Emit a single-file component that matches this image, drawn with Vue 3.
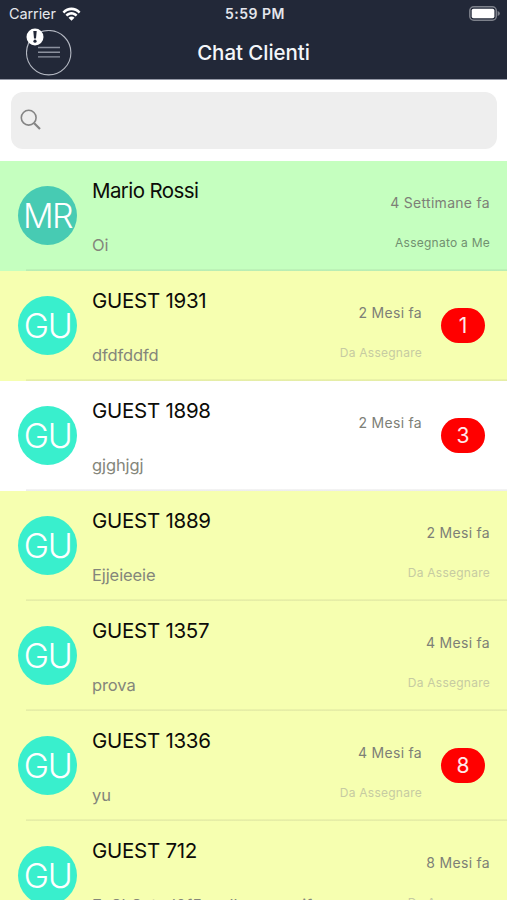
<script setup>
const chats = [
  { initials: 'MR', name: 'Mario Rossi', message: 'Oi', time: '4 Settimane fa', status: 'Assegnato a Me', tone: 'mine' },
  { initials: 'GU', name: 'GUEST 1931', message: 'dfdfddfd', time: '2 Mesi fa', status: 'Da Assegnare', tone: 'open', unread: 1 },
  { initials: 'GU', name: 'GUEST 1898', message: 'gjghjgj', time: '2 Mesi fa', status: '', tone: 'plain', unread: 3 },
  { initials: 'GU', name: 'GUEST 1889', message: 'Ejjeieeie', time: '2 Mesi fa', status: 'Da Assegnare', tone: 'open' },
  { initials: 'GU', name: 'GUEST 1357', message: 'prova', time: '4 Mesi fa', status: 'Da Assegnare', tone: 'open' },
  { initials: 'GU', name: 'GUEST 1336', message: 'yu', time: '4 Mesi fa', status: 'Da Assegnare', tone: 'open', unread: 8 },
  { initials: 'GU', name: 'GUEST 712', message: 'EaShSntad0f5easllasenanaif', time: '8 Mesi fa', status: 'Da Assegnare', tone: 'open' },
]
</script>

<template>
  <div class="screen">
    <header class="header">
      <div class="status-bar">
        <div class="carrier">
          <span class="carrier-name">Carrier</span>
          <svg class="wifi" width="19" height="14" viewBox="0 0 19 14" fill="#fff">
            <path d="M0.5 4.7C5.5-0.9 13.5-0.9 18.500 4.700L16.700 6.500C12.600 2.200 6.400 2.200 2.300 6.500Z" />
            <path d="M3.500 7.700C7 4.200 12 4.200 15.500 7.700L13.700 9.500C11.200 7.100 7.800 7.100 5.300 9.500Z" />
            <path d="M6.500 10.700C8.200 9.200 10.800 9.200 12.500 10.700L9.500 13.800Z" />
          </svg>
        </div>
        <span class="clock">5:59 PM</span>
        <svg class="battery" width="32" height="15" viewBox="0 0 32 15">
          <rect x="0.8" y="0.8" width="26.500" height="13.400" rx="4" fill="none" stroke="#7d818b" stroke-width="1.500" />
          <rect x="2.700" y="2.700" width="22.700" height="9.600" rx="1.800" fill="#fff" />
          <path d="M28.600 5v5q2.300-.9 2.300-2.500t-2.300-2.500z" fill="#7d818b" />
        </svg>
      </div>
      <div class="nav-bar">
        <div class="menu">
          <svg width="46" height="46" viewBox="0 0 46 46" fill="none">
            <circle cx="22.700" cy="22.700" r="22.200" stroke="#b4b8c2" stroke-width="1.100" />
            <path d="M12 17.500h22M12 22.200h22M12 26.900h22" stroke="#8c919e" stroke-width="1.400" />
          </svg>
          <svg class="alert" width="18" height="18" viewBox="0 0 18 18">
            <circle cx="9" cy="9" r="8.500" fill="#fff" />
            <path d="M7.300 3h3.400l-.7 7.400h-2z" fill="#222838" />
            <circle cx="9" cy="13.200" r="1.600" fill="#222838" />
          </svg>
        </div>
        <h1 class="title">Chat Clienti</h1>
      </div>
    </header>

    <div class="search-area">
      <div class="search">
        <svg width="22" height="22" viewBox="0 0 22 22" fill="none" stroke="#858585">
          <circle cx="8.700" cy="8.700" r="7.400" stroke-width="1.600" />
          <path d="M14.200 14.200L20 20" stroke-width="2.200" />
        </svg>
      </div>
    </div>

    <main class="list">
      <article v-for="chat in chats" :key="chat.name" class="row" :class="chat.tone">
        <div class="avatar"><span>{{ chat.initials }}</span></div>
        <div class="summary">
          <div class="name">{{ chat.name }}</div>
          <div class="message">{{ chat.message }}</div>
        </div>
        <div class="meta">
          <div class="time">{{ chat.time }}</div>
          <div class="state">{{ chat.status }}</div>
        </div>
        <div v-if="chat.unread" class="unread">{{ chat.unread }}</div>
      </article>
    </main>
  </div>
</template>

<style>
body {
  margin: 0;
  background: #fff;
}
</style>

<style scoped>
.screen {
  width: 507px;
  height: 900px;
  overflow: hidden;
  display: flex;
  flex-direction: column;
  background: #fff;
  font-family: Inter, "Liberation Sans", sans-serif;
}
.header {
  flex: none;
  box-sizing: border-box;
  height: 80px;
  background: #222838;
  border-bottom: 1px solid #9599a6;
  color: #fff;
}
.status-bar {
  display: grid;
  grid-template-columns: 1fr auto 1fr;
  align-items: center;
  height: 27px;
  padding: 0 6px 0 9px;
}
.carrier {
  display: flex;
  align-items: center;
  gap: 6px;
}
.carrier-name {
  font-size: 14.500px;
  letter-spacing: -0.1px;
  color: #e6e8ed;
}
.clock {
  font-size: 14px;
  font-weight: 600;
  letter-spacing: 0.5px;
  color: #e4e6ec;
}
.battery {
  justify-self: end;
}
.nav-bar {
  display: grid;
  grid-template-columns: 46px 1fr 46px;
  align-items: center;
  height: 51px;
  padding: 0 26px;
}
.menu {
  position: relative;
  height: 46px;
}
.alert {
  position: absolute;
  left: 0;
  top: -2px;
}
.title {
  margin: 0;
  text-align: center;
  font-size: 20.500px;
  font-weight: 550;
  letter-spacing: -0.05px;
  color: #f4f6fa;
}
.search-area {
  flex: none;
  box-sizing: border-box;
  height: 81px;
  padding: 12px 10px 12px 11px;
}
.search {
  display: flex;
  align-items: center;
  box-sizing: border-box;
  height: 57px;
  padding: 0 0 1px 9px;
  border-radius: 12px;
  background: #eee;
}
.row {
  display: flex;
  box-sizing: border-box;
  height: 110px;
  padding-right: 17px;
  background-image: linear-gradient(rgba(60, 60, 67, 0.05), rgba(60, 60, 67, 0.1));
  background-size: 481px 2px;
  background-position: 26px 100%;
  background-repeat: no-repeat;
}
.mine {
  background-color: #c5ffbf;
}
.open {
  background-color: #f6ffb0;
}
.plain {
  background-color: #fff;
}
.avatar {
  flex: none;
  display: flex;
  align-items: center;
  justify-content: center;
  width: 59px;
  height: 59px;
  margin: 25px 15px 0 18px;
  border-radius: 50%;
  background: #39efcd;
  color: #fff;
  font-size: 34px;
  font-weight: 350;
  letter-spacing: -1.500px;
}
.mine .avatar {
  background: #47cbb3;
}
.summary {
  flex: 1;
  min-width: 0;
  white-space: nowrap;
}
.name {
  margin-top: 17px;
  line-height: 26px;
  font-size: 20.500px;
  letter-spacing: -0.27px;
  color: #0c0c08;
}
.mine .name {
  letter-spacing: -0.6px;
}
.message {
  margin-top: 30px;
  line-height: 23px;
  font-size: 16.500px;
  letter-spacing: -0.1px;
  color: #84867b;
}
.meta {
  flex: none;
  text-align: right;
  white-space: nowrap;
}
.time {
  margin-top: 32px;
  line-height: 20px;
  font-size: 14px;
  letter-spacing: 0.3px;
  color: #7d8077;
}
.state {
  margin-top: 22px;
  line-height: 16px;
  font-size: 12px;
  letter-spacing: 0.25px;
  color: #c6cba2;
}
.mine .state {
  color: #719070;
}
.unread {
  flex: none;
  width: 44px;
  height: 35px;
  margin: 37px 5px 0 19px;
  border-radius: 17.500px;
  background: #f00;
  color: #ffe9e9;
  font-size: 21px;
  line-height: 35px;
  text-align: center;
}
</style>
